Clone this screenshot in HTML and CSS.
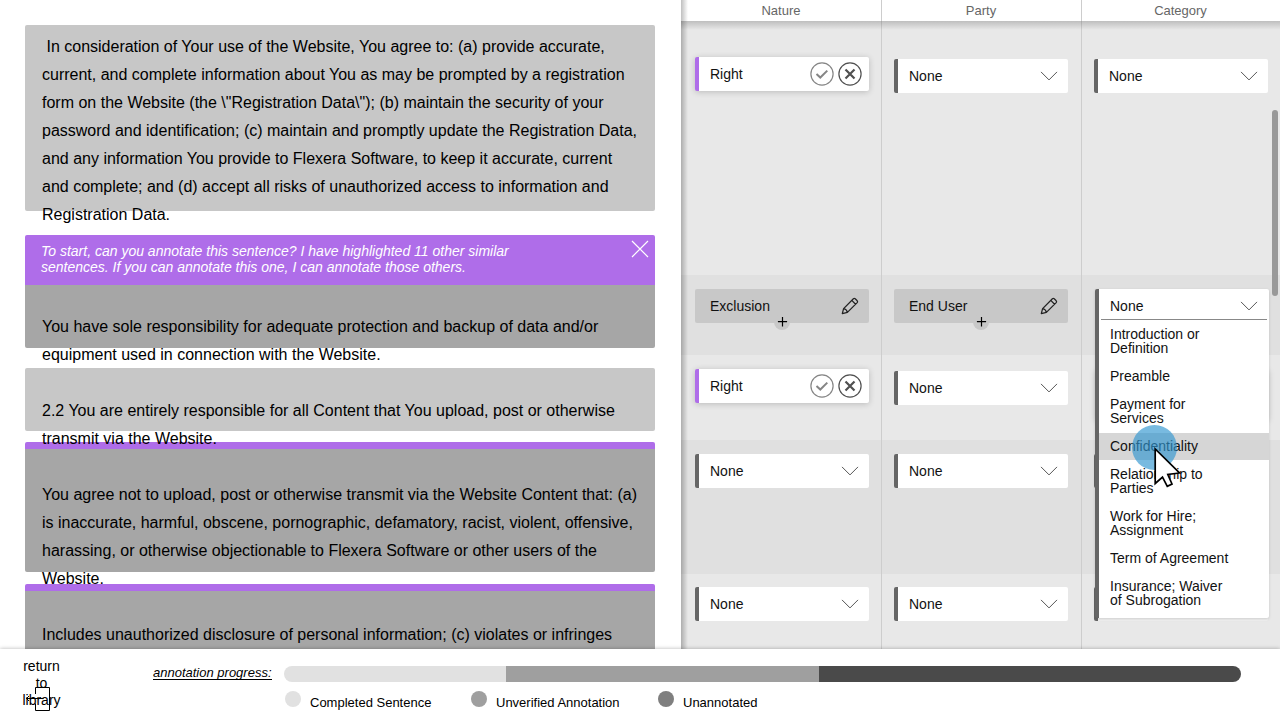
FILE: index.html
```html
<!DOCTYPE html>
<html lang="en">
<head>
<meta charset="utf-8">
<title>Annotation</title>
<link rel="stylesheet" href="styles.css">
</head>
<body>
<svg class="defs" width="0" height="0">
  <symbol id="chev" viewBox="0 0 18 10"><path d="M1 .9 L9 8.9 L17 .9" fill="none" stroke="#555" stroke-width="1"/></symbol>
  <symbol id="ok" viewBox="0 0 24 24"><circle cx="12" cy="12" r="11.1" fill="none" stroke="#858585" stroke-width="1.2"/><path d="M6.5 12 L10.3 15.5 L17.3 8.6" fill="none" stroke="#858585" stroke-width="2"/></symbol>
  <symbol id="no" viewBox="0 0 24 24"><circle cx="12" cy="12" r="11.1" fill="none" stroke="#505050" stroke-width="1.2"/><path d="M7.5 7.5 L16.5 16.5 M16.5 7.5 L7.5 16.5" fill="none" stroke="#505050" stroke-width="2.2"/></symbol>
  <symbol id="pen" viewBox="0 0 18 18"><path d="M1.3 16.7 L2.6 11.6 L12.4 1.8 Q13.3 1 14.2 1.8 L16.2 3.8 Q17 4.7 16.2 5.6 L6.4 15.4 Z M2.6 11.6 Q5.8 12.2 6.4 15.4 M10.8 3.4 L14.6 7.2" fill="none" stroke="#222" stroke-width="1.25" stroke-linejoin="round"/></symbol>
  <symbol id="plus" viewBox="0 0 16 16"><path d="M8.5 3 V12.4 M3.9 7.7 H13.1" stroke="#000" stroke-width="1.2"/></symbol>
</svg>
<div class="app">
  <div class="main">
    <section class="doc">
      <div class="block first">
        <p><span>&nbsp;In consideration of Your use of the Website, You agree to: (a) provide accurate,</span><span>current, and complete information about You as may be prompted by a registration</span><span>form on the Website (the \"Registration Data\"); (b) maintain the security of your</span><span>password and identification; (c) maintain and promptly update the Registration Data,</span><span>and any information You provide to Flexera Software, to keep it accurate, current</span><span>and complete; and (d) accept all risks of unauthorized access to information and</span><span>Registration Data.</span></p>
      </div>
      <div class="tip">
        <div class="tip-text"><span>To start, can you annotate this sentence? I have highlighted 11 other similar</span><span>sentences. If you can annotate this one, I can annotate those others.</span></div>
        <svg class="close" viewBox="0 0 18 18"><path d="M1 1 L17 17 M17 1 L1 17" stroke="#fff" stroke-width="1.2"/></svg>
      </div>
      <div class="block dark second">
        <p><span>You have sole responsibility for adequate protection and backup of data and/or</span><span>equipment used in connection with the Website.</span></p>
      </div>
      <div class="block third">
        <p><span>2.2 You are entirely responsible for all Content that You upload, post or otherwise</span><span>transmit via the Website.</span></p>
      </div>
      <div class="block dark fourth">
        <p><span>You agree not to upload, post or otherwise transmit via the Website Content that: (a)</span><span>is inaccurate, harmful, obscene, pornographic, defamatory, racist, violent, offensive,</span><span>harassing, or otherwise objectionable to Flexera Software or other users of the</span><span>Website.</span></p>
      </div>
      <div class="block dark fifth">
        <p><span>Includes unauthorized disclosure of personal information; (c) violates or infringes</span></p>
      </div>
    </section>
    <section class="grid">
      <div class="row head"><div class="cell">Nature</div><div class="cell">Party</div><div class="cell">Category</div></div>
      <div class="row r1">
        <div class="cell"><div class="field sug">Right<span class="acts"><svg><use href="#ok"/></svg><svg><use href="#no"/></svg></span></div></div>
        <div class="cell"><div class="field">None<svg class="chev"><use href="#chev"/></svg></div></div>
        <div class="cell"><div class="field">None<svg class="chev"><use href="#chev"/></svg></div></div>
      </div>
      <div class="row alt r2">
        <div class="cell"><div class="field done">Exclusion<svg class="pen"><use href="#pen"/></svg><svg class="plus"><use href="#plus"/></svg></div></div>
        <div class="cell"><div class="field done">End User<svg class="pen"><use href="#pen"/></svg><svg class="plus"><use href="#plus"/></svg></div></div>
        <div class="cell">
          <div class="menu">
            <div class="menu-top">None<svg class="chev"><use href="#chev"/></svg></div>
            <ul>
              <li>Introduction or<br>Definition</li>
              <li>Preamble</li>
              <li>Payment for<br>Services</li>
              <li class="hover">Confidentiality</li>
              <li>Relationship to<br>Parties</li>
              <li>Work for Hire;<br>Assignment</li>
              <li>Term of Agreement</li>
              <li>Insurance; Waiver<br>of Subrogation</li>
            </ul>
          </div>
        </div>
      </div>
      <div class="row r3">
        <div class="cell"><div class="field sug">Right<span class="acts"><svg><use href="#ok"/></svg><svg><use href="#no"/></svg></span></div></div>
        <div class="cell"><div class="field">None<svg class="chev"><use href="#chev"/></svg></div></div>
        <div class="cell"><div class="under"></div></div>
      </div>
      <div class="row alt r4">
        <div class="cell"><div class="field">None<svg class="chev"><use href="#chev"/></svg></div></div>
        <div class="cell"><div class="field">None<svg class="chev"><use href="#chev"/></svg></div></div>
        <div class="cell"><div class="field"></div></div>
      </div>
      <div class="row r5">
        <div class="cell"><div class="field">None<svg class="chev"><use href="#chev"/></svg></div></div>
        <div class="cell"><div class="field">None<svg class="chev"><use href="#chev"/></svg></div></div>
        <div class="cell"><div class="field"></div></div>
      </div>
      <div class="head-shade"></div>
      <div class="side-shade"></div>
      <div class="scroll"></div>
    </section>
  </div>
  <footer class="foot">
    <div class="back">return<br>to<br>library
      <svg class="exit" viewBox="0 0 26 26"><path d="M10.5 8 V1.5 H24.5 V24.5 H10.5 V17.5 M1.5 12.5 H18.5 M4 10 L1.5 12.5 L4 15" fill="none" stroke="#000" stroke-width="1"/></svg>
    </div>
    <div class="label"><span>annotation progress:</span></div>
    <div class="progress">
      <div class="bar"><i class="b1"></i><i class="b2"></i><i class="b3"></i></div>
      <div class="legend">
        <div class="key k1"><i></i><span>Completed Sentence</span></div>
        <div class="key k2"><i></i><span>Unverified Annotation</span></div>
        <div class="key k3"><i></i><span>Unannotated</span></div>
      </div>
    </div>
  </footer>
  <div class="touch"></div>
  <svg class="cursor" viewBox="0 0 30 42"><path d="M2.2 3 V37.5 L9.5 31 L14.3 40.3 L19 38 L14.8 28.5 L26.5 27 Z" fill="#fff" stroke="#000" stroke-width="1.7"/></svg>
</div>
</body>
</html>
```
FILE: styles.css
```css
* { box-sizing: border-box; }
body { margin: 0; font-family: "Liberation Sans", Arial, sans-serif; color: #000; background: #fff; }
.defs { position: absolute; }
.app { position: relative; width: 1280px; height: 720px; overflow: hidden; display: flex; flex-direction: column; }
.main { display: flex; height: 649px; overflow: hidden; }
.doc { width: 681px; flex: none; padding: 25px 26px 0 25px; height: 649px; overflow: hidden; }
.block { background: #c7c7c7; border-radius: 2px; padding-left: 17px; }
.block p { margin: 0; font-size: 16px; line-height: 28px; position: relative; z-index: 1; }
.block span, .tip-text span { display: block; white-space: nowrap; }
.dark { background: #a6a6a6; }
.first { height: 186px; padding-top: 8px; margin-bottom: 24px; }
.tip { height: 50px; background: #af6de9; border-radius: 2px 2px 0 0; display: flex; justify-content: space-between; padding: 8px 6px 0 16px; color: #fff; font-style: italic; font-size: 14px; line-height: 16px; }
.close { width: 18px; height: 18px; margin-top: -3px; }
.second { height: 63px; padding-top: 28px; border-radius: 0 0 2px 2px; margin-bottom: 20px; }
.third { height: 63px; padding-top: 29px; margin-bottom: 11px; }
.fourth { height: 130px; padding-top: 32px; border-top: 7px solid #af6de9; margin-bottom: 12px; }
.fifth { height: 100px; padding-top: 30px; border-top: 7px solid #af6de9; }

.grid { position: relative; width: 599px; height: 649px; background: #e8e8e8; }
.row { display: grid; grid-template-columns: 201px 200px 198px; background: #e8e8e8; }
.alt { background: #e0e0e0; }
.cell { border-right: 1px solid #cdcdcd; padding-left: 13px; min-width: 0; }
.cell:first-child { padding-left: 14px; }
.cell:last-child { border-right: 0; }
.head { height: 21px; background: #fff; color: #666; font-size: 13px; line-height: 21px; text-align: center; }
.head .cell { padding: 0 1px 0 0; }
.head .cell:first-child { padding: 0; }
.r1 { height: 254px; }
.r2 { height: 80px; }
.r3 { height: 85px; }
.r4 { height: 134px; }
.r5 { height: 75px; }
.r1 .cell { padding-top: 38px; }
.r2 .cell { padding-top: 14px; }
.r3 .cell { padding-top: 16px; }
.r4 .cell { padding-top: 14px; }
.r5 .cell { padding-top: 13px; }
.r1 .cell:first-child { padding-top: 36px; }
.r3 .cell:first-child { padding-top: 14px; }
.field { position: relative; width: 174px; height: 34px; background: #fff; border-left: 4px solid #666; border-radius: 2px; padding: 0 10px 0 11px; display: flex; align-items: center; justify-content: space-between; font-size: 14px; color: #111; }
.cell:nth-child(n+2) .field { margin-left: -1px; }
.chev { width: 18px; height: 10px; }
.sug { border-left-color: #af6de9; padding-right: 7px; box-shadow: 0 1px 6px rgba(0,0,0,.2); }
.acts { display: flex; gap: 4px; }
.acts svg { width: 24px; height: 24px; }
.done { background: #c8c8c8; border-left-color: #c8c8c8; }
.pen { width: 18px; height: 18px; }
.plus { position: absolute; width: 16px; height: 16px; left: 75px; top: 25px; background: #c8c8c8; border-radius: 50%; }
.under { width: 174px; height: 50px; box-shadow: 0 0 6px rgba(0,0,0,.15); }
.menu { position: relative; z-index: 2; width: 174px; height: 329px; background: #fff; border-left: 4px solid #666; border-radius: 2px; box-shadow: 0 1px 3px rgba(0,0,0,.15); font-size: 14px; line-height: 14px; color: #111; }
.menu-top { height: 31px; margin: 0 2px; border-bottom: 1px solid #888; display: flex; justify-content: space-between; align-items: center; padding: 4px 9px 0; }
.menu ul { list-style: none; margin: 1px 0 0; padding: 0; }
.menu li { padding: 6px 0 8px 11px; }
.menu .hover { background: #d6d6d6; padding-bottom: 7px; margin-bottom: 1px; }
.r5 .cell:last-child .field { background: #f0f0f0; }
.head-shade { position: absolute; left: 0; right: 0; top: 21px; height: 9px; background: linear-gradient(rgba(0,0,0,.18), rgba(0,0,0,0)); }
.side-shade { position: absolute; left: 0; top: 0; bottom: 0; width: 7px; background: linear-gradient(90deg, rgba(0,0,0,.25), rgba(0,0,0,0)); }
.scroll { position: absolute; left: 591px; top: 110px; width: 6px; height: 186px; border-radius: 3px; background: #999; }

.foot { position: relative; z-index: 3; height: 71px; background: #fff; box-shadow: 0 0 4px rgba(0,0,0,.3); display: flex; }
.back { position: relative; width: 83px; text-align: center; font-size: 14px; line-height: 17px; padding-top: 9px; }
.exit { position: absolute; left: 25px; top: 686px; top: 37px; width: 26px; height: 26px; }
.label { width: 201px; padding: 16px 0 0 70px; font-style: italic; font-size: 13px; line-height: 15px; white-space: nowrap; }
.label span { display: inline-block; border-bottom: 1px solid #000; height: 15px; }
.progress { width: 957px; padding-top: 17px; }
.bar { display: flex; height: 16px; border-radius: 8px; overflow: hidden; }
.b1 { width: 222px; background: #e1e1e1; }
.b2 { width: 313px; background: #9f9f9f; }
.b3 { flex: 1; background: #4a4a4a; }
.legend { display: flex; padding: 9px 0 0 1px; font-size: 13px; line-height: 15px; }
.key { display: flex; gap: 9px; white-space: nowrap; }
.key i { width: 16px; height: 16px; border-radius: 50%; }
.key span { padding-top: 4px; }
.k1 { width: 186px; }
.k2 { width: 187px; }
.k1 i { background: #e1e1e1; }
.k2 i { background: #9f9f9f; }
.k3 i { background: #7f7f7f; }
.touch { position: absolute; z-index: 4; left: 1132px; top: 425px; width: 45px; height: 45px; border-radius: 50%; background: rgba(47,149,207,.65); }
.cursor { position: absolute; z-index: 5; left: 1153px; top: 446px; width: 30px; height: 42px; }
```
